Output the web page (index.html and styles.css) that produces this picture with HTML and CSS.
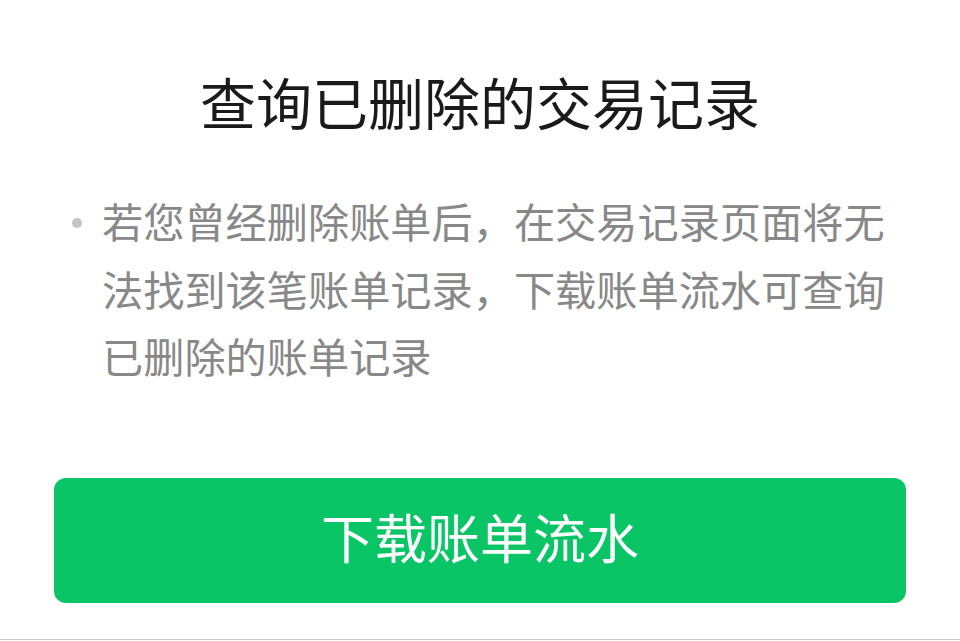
FILE: index.html
```html
<!DOCTYPE html>
<html lang="zh-CN">
<head>
<meta charset="utf-8">
<link rel="stylesheet" href="styles.css">
</head>
<body>
<div class="page">
  <h1 class="title">查询已删除的交易记录</h1>
  <div class="desc">
    <span class="dot"></span>
    <p class="desc-text">若您曾经删除账单后，在交易记录页面将无法找到该笔账单记录，下载账单流水可查询已删除的账单记录</p>
  </div>
  <div class="actions">
    <button class="btn">下载账单流水</button>
  </div>
</div>
</body>
</html>
```
FILE: styles.css
```css
html, body {
  margin: 0;
  padding: 0;
  background: #ffffff;
}
body {
  width: 960px;
  height: 641px;
  overflow: hidden;
  font-family: "Noto Sans CJK SC", "Noto Sans", sans-serif;
}
.page {
  height: 640px;
  border-bottom: 1px solid #c9c9c9;
  padding-top: 61px;
  box-sizing: border-box;
}
.title {
  margin: 0;
  font-size: 56px;
  line-height: 80px;
  font-weight: 400;
  color: #1a1a1a;
  text-align: center;
}
.desc {
  display: flex;
  align-items: flex-start;
  margin-top: 46px;
  padding-left: 72px;
}
.dot {
  flex: none;
  width: 10px;
  height: 10px;
  border-radius: 50%;
  background: #c4c4c4;
  margin-top: 31px;
  margin-right: 20px;
}
.desc-text {
  margin: 0;
  width: 800px;
  font-size: 41.2px;
  line-height: 67.5px;
  color: #888888;
}
.actions {
  padding: 0 54px;
  margin-top: 88px;
}
.btn {
  display: block;
  width: 100%;
  height: 125px;
  border: none;
  border-radius: 12px;
  background: #0ac566;
  color: #ffffff;
  font-family: "Noto Sans CJK SC", "Noto Sans", sans-serif;
  font-size: 53px;
  font-weight: 400;
  padding: 0 0 8px 0;
}
```
